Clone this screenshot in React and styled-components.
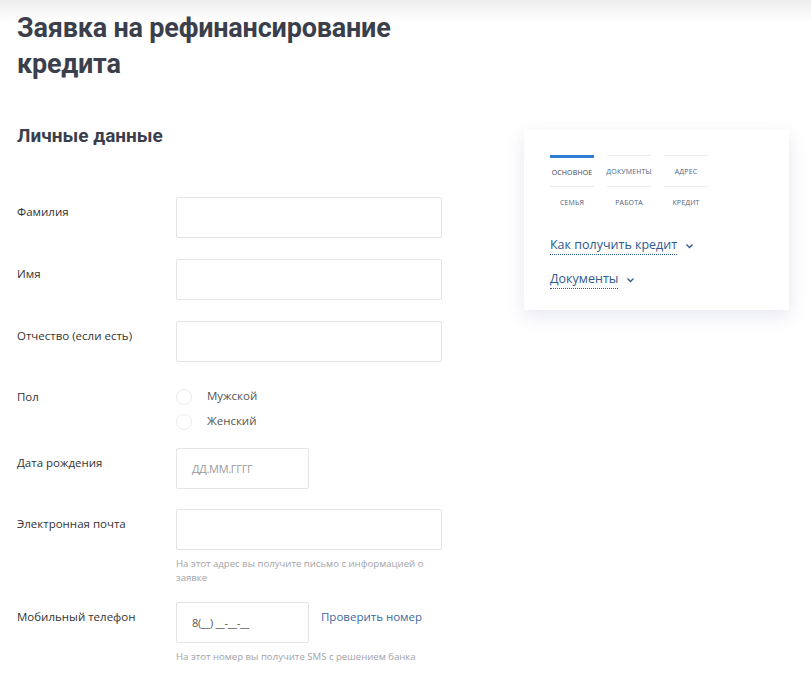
import React from "react";
import styled, { createGlobalStyle } from "styled-components";

const Global = createGlobalStyle`
  html, body { margin: 0; padding: 0; }
  body {
    background: linear-gradient(#eeeeef 0px, #ffffff 22px) no-repeat, #ffffff;
    font-family: "Open Sans", "Noto Sans", sans-serif;
    color: #333;
  }
`;

const Page = styled.div`
  display: flex;
  align-items: flex-start;
  width: 811px;
  height: 684px;
  overflow: hidden;
`;

const Main = styled.div`
  width: 524px;
  padding: 10px 0 0 17px;
  box-sizing: border-box;
`;

const Title = styled.h1`
  margin: 0;
  font-family: "Roboto", sans-serif;
  font-weight: 700;
  font-size: 27px;
  line-height: 36px;
  letter-spacing: -0.2px;
  color: #3b3f4c;
  width: 400px;
`;

const Section = styled.h2`
  margin: 40px 0 0;
  font-family: "Roboto", sans-serif;
  font-weight: 700;
  font-size: 19px;
  line-height: 28px;
  color: #3b3f4c;
`;

const Form = styled.div`
  margin-top: 47px;
  display: flex;
  flex-direction: column;
`;

const Row = styled.div`
  display: grid;
  grid-template-columns: 159px 1fr;
  margin-bottom: ${(p) => p.$gap ?? 21}px;
`;

const Label = styled.div`
  font-size: 11.5px;
  line-height: 18px;
  padding-top: ${(p) => p.$pt ?? 6}px;
  color: #333;
`;

const Field = styled.div`
  display: flex;
  flex-direction: column;
`;

const Inline = styled.div`
  display: flex;
  align-items: flex-start;
  gap: 12px;
`;

const Input = styled.div`
  width: ${(p) => p.$w}px;
  height: 41px;
  box-sizing: border-box;
  border: 1px solid #e5e5e7;
  border-radius: 2px;
  background: #fff;
  padding: 0 15px;
  display: flex;
  align-items: center;
  font-size: 11px;
  color: ${(p) => (p.$dark ? "#555" : "#9a9a9a")};
  letter-spacing: -0.3px;
`;

const Hint = styled.div`
  margin-top: 7px;
  width: 266px;
  font-size: 9.6px;
  line-height: 14px;
  color: #a3a3a8;
`;

const Radios = styled.div`
  display: flex;
  flex-direction: column;
  gap: 6px;
  padding-top: 2px;
`;

const RadioItem = styled.label`
  display: flex;
  align-items: center;
  gap: 15px;
  font-size: 11.5px;
  line-height: 18px;
  color: #555;
`;

const Circle = styled.span`
  width: 16px;
  height: 16px;
  border-radius: 50%;
  border: 1px solid #ececee;
  box-sizing: border-box;
  margin-top: 3px;
`;

const CheckLink = styled.a`
  font-size: 11.5px;
  line-height: 18px;
  padding-top: 6px;
  color: #3a6aa3;
  text-decoration: none;
`;

const Card = styled.div`
  margin-top: 130px;
  width: 265px;
  height: 180px;
  box-sizing: border-box;
  background: #fff;
  box-shadow: 0 6px 18px rgba(70, 80, 140, 0.13);
  padding: 25px 0 0 26px;
`;

const Tabs = styled.div`
  display: grid;
  grid-template-columns: repeat(3, 44px);
  column-gap: 13px;
`;

const Tab = styled.div`
  border-top: ${(p) => (p.$active ? "3px solid #2f7fd6" : "1px solid #ececef")};
  height: 31px;
  box-sizing: border-box;
  display: flex;
  align-items: center;
  justify-content: center;
  padding-top: ${(p) => (p.$active ? 0 : 1)}px;
  font-size: 7px;
  letter-spacing: 0.15px;
  text-transform: uppercase;
  white-space: nowrap;
  color: ${(p) => (p.$active ? "#3d3d45" : "#4f5f80")};
`;

const Links = styled.div`
  margin-top: 19px;
  display: flex;
  flex-direction: column;
  gap: 15px;
`;

const Toggle = styled.div`
  display: flex;
  align-items: center;
  gap: 8px;
  color: #2d5a8f;
  font-size: 12.5px;
  line-height: 20px;
`;

const Dotted = styled.span`
  border-bottom: 1px dotted #2d5a8f;
  line-height: 18px;
`;

const Chevron = () => (
  <svg width="9" height="6" viewBox="0 0 9 6" fill="none">
    <path d="M1.5 1.5 L4.5 4.5 L7.5 1.5" stroke="#2d5a8f" strokeWidth="1.3" />
  </svg>
);

export default function App() {
  return (
    <>
      <Global />
      <Page>
        <Main>
          <Title>Заявка на рефинансирование кредита</Title>
          <Section>Личные данные</Section>
          <Form>
            <Row>
              <Label>Фамилия</Label>
              <Input $w={266} />
            </Row>
            <Row>
              <Label>Имя</Label>
              <Input $w={266} />
            </Row>
            <Row $gap={22}>
              <Label>Отчество (если есть)</Label>
              <Input $w={266} />
            </Row>
            <Row $gap={18}>
              <Label $pt={4}>Пол</Label>
              <Radios>
                <RadioItem>
                  <Circle />
                  Мужской
                </RadioItem>
                <RadioItem>
                  <Circle />
                  Женский
                </RadioItem>
              </Radios>
            </Row>
            <Row $gap={20}>
              <Label>Дата рождения</Label>
              <Input $w={133}>ДД.ММ.ГГГГ</Input>
            </Row>
            <Row $gap={17}>
              <Label>Электронная почта</Label>
              <Field>
                <Input $w={266} />
                <Hint>На этот адрес вы получите письмо с информацией о заявке</Hint>
              </Field>
            </Row>
            <Row>
              <Label>Мобильный телефон</Label>
              <Field>
                <Inline>
                  <Input $w={133} $dark>8(__) __-__-__</Input>
                  <CheckLink>Проверить номер</CheckLink>
                </Inline>
                <Hint>На этот номер вы получите SMS с решением банка</Hint>
              </Field>
            </Row>
          </Form>
        </Main>
        <Card>
          <Tabs>
            <Tab $active>Основное</Tab>
            <Tab>Документы</Tab>
            <Tab>Адрес</Tab>
            <Tab>Семья</Tab>
            <Tab>Работа</Tab>
            <Tab>Кредит</Tab>
          </Tabs>
          <Links>
            <Toggle>
              <Dotted>Как получить кредит</Dotted>
              <Chevron />
            </Toggle>
            <Toggle>
              <Dotted>Документы</Dotted>
              <Chevron />
            </Toggle>
          </Links>
        </Card>
      </Page>
    </>
  );
}
